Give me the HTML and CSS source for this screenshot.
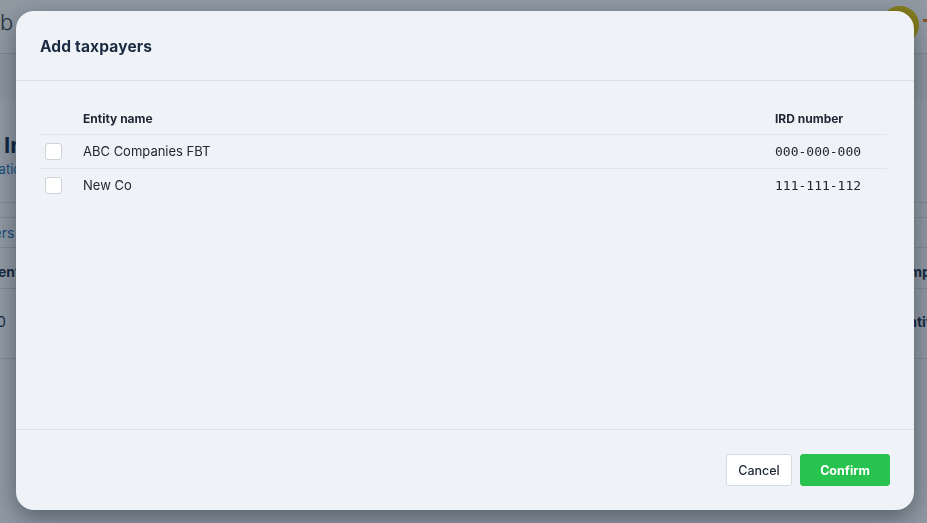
FILE: index.html
```html
<!DOCTYPE html>
<html lang="en">
<head>
<meta charset="utf-8">
<title>Add taxpayers</title>
<link rel="stylesheet" href="styles.css">
</head>
<body>
<div class="page">
  <header class="topbar">
    <span class="brand">b</span>
    <span class="avatar"></span>
    <span class="caret"></span>
  </header>
  <div class="subnav"></div>
  <main class="content">
    <h1 class="page-title">Income tax</h1>
    <a class="page-link">Organisation details</a>
    <div class="strip"></div>
    <div class="tabs"><a class="tab">Taxpayers</a></div>
    <div class="bg-table">
      <div class="bg-row bg-head"><span class="left">Client</span><span class="right">Company</span></div>
      <div class="bg-row bg-body"><span class="left">0</span><span class="right r2">Entities</span></div>
    </div>
  </main>
</div>

<div class="overlay">
  <div class="modal" role="dialog" aria-labelledby="modal-title">
    <div class="modal-header">
      <h2 id="modal-title">Add taxpayers</h2>
    </div>
    <div class="modal-body">
      <table class="tp-table">
        <thead>
          <tr>
            <th class="col-check"></th>
            <th class="col-name">Entity name</th>
            <th class="col-ird">IRD number</th>
          </tr>
        </thead>
        <tbody>
          <tr>
            <td class="col-check"><span class="checkbox"></span></td>
            <td class="col-name">ABC Companies FBT</td>
            <td class="col-ird ird">000-000-000</td>
          </tr>
          <tr>
            <td class="col-check"><span class="checkbox"></span></td>
            <td class="col-name">New Co</td>
            <td class="col-ird ird">111-111-112</td>
          </tr>
        </tbody>
      </table>
    </div>
    <div class="modal-footer">
      <button class="btn btn-cancel">Cancel</button>
      <button class="btn btn-confirm">Confirm</button>
    </div>
  </div>
</div>
</body>
</html>
```

FILE: styles.css
```css
* { box-sizing: border-box; }
html, body { margin: 0; padding: 0; }
body {
  width: 927px;
  height: 523px;
  overflow: hidden;
  font-family: Inter, "Noto Sans", Arial, sans-serif;
  background: #ffffff;
}

/* background page */
.page { width: 927px; height: 523px; overflow: hidden; background: #fff; }
.topbar {
  height: 54px;
  border-bottom: 1px solid #d5dbe2;
  display: flex;
  align-items: center;
  background: #fff;
}
.brand { font-size: 22px; color: #3a3a3a; margin-top: -10px; font-weight: 300; }
.avatar {
  margin-left: auto;
  width: 38px; height: 38px;
  border-radius: 50%;
  background: #e8c800;
  margin-top: -4px;
}
.caret { width: 10px; height: 3px; margin-left: 4px; margin-right: -6px; background: #f47c20; margin-top: -12px; }
.subnav { height: 46px; background: #f6f7f9; }
.content { padding: 32px 0 0 4px; background: #fff; }
.page-title { margin: 0; font-size: 22px; font-weight: 700; color: #0e2a4a; line-height: 26px; white-space: nowrap; }
.page-link { display: block; font-size: 13px; color: #1c6fb8; line-height: 18px; margin: 2px 0 0 -53px; white-space: nowrap; }
.strip { margin: 24px 0 0 -4px; height: 16px; border-top: 1px solid #dfe3e8; border-bottom: 1px solid #dfe3e8; }
.tabs { margin-left: -4px; border-bottom: 1px solid #dfe3e8; height: 30px; display: flex; align-items: center; }
.tab { font-size: 14px; color: #1c6fb8; margin-left: -54px; white-space: nowrap; }
.bg-table { margin-left: -4px; }
.bg-row { display: flex; justify-content: space-between; border-bottom: 1px solid #dfe3e8; font-size: 14px; color: #1a2b44; white-space: nowrap; }
.bg-head { font-weight: 700; height: 41px; padding-top: 15px; }
.bg-body { height: 70px; padding-top: 24px; }
.bg-row .left { margin-left: -20px; }
.bg-body .left { margin-left: -3px; }
.bg-row .right { margin-right: -29px; font-weight: 700; }
.bg-row .r2 { margin-right: -24px; font-weight: 700; }

/* overlay + modal */
.overlay {
  position: fixed;
  inset: 0;
  background: rgba(22, 40, 60, 0.47);
  display: flex;
  align-items: flex-start;
  justify-content: flex-start;
  padding: 11px 0 0 16px;
}
.modal {
  width: 898px;
  height: 499px;
  background: #eff2f7;
  border-radius: 18px;
  box-shadow: 0 8px 24px rgba(10, 20, 35, 0.45);
  display: flex;
  flex-direction: column;
  overflow: hidden;
}
.modal-header {
  height: 70px;
  border-bottom: 1px solid #dde1e6;
  display: flex;
  align-items: center;
  padding: 0 24px;
}
.modal-header h2 {
  margin: 1px 0 0;
  font-family: Inter, "Noto Sans", Arial, sans-serif;
  font-size: 15.5px;
  font-weight: 700;
  color: #1b2b41;
  letter-spacing: 0.15px;
}
.modal-body {
  flex: 1;
  padding: 22px 27px 0 24px;
}
.tp-table {
  width: 100%;
  border-collapse: collapse;
  font-size: 13px;
  color: #23272e;
}
.tp-table th {
  font-size: 12px;
  font-weight: 700;
  text-align: left;
  color: #1f2633;
  height: 31px;
  vertical-align: middle;
  border-bottom: 1px solid #e2e6eb;
  padding: 0;
}
.tp-table td {
  height: 34px;
  padding: 0;
  vertical-align: middle;
  border-bottom: 1px solid #e2e6eb;
}
.tp-table tbody tr:last-child td { border-bottom: none; }
.col-check { width: 43px; padding-left: 5px !important; }
.col-ird { width: 112px; }
.ird { font-family: "DejaVu Sans Mono", "Liberation Mono", monospace; font-size: 13px; color: #23272e; }
.checkbox {
  display: block;
  width: 17px; height: 17px;
  background: #fff;
  border: 1px solid #cfd3d8;
  border-radius: 3px;
}

.modal-footer {
  height: 81px;
  border-top: 1px solid #dde1e6;
  display: flex;
  justify-content: flex-end;
  align-items: center;
  gap: 8px;
  padding: 0 24px;
}
.btn {
  height: 32px;
  border-radius: 3px;
  font-family: Inter, "Noto Sans", Arial, sans-serif;
  font-size: 12.5px;
  cursor: pointer;
}
.btn-cancel {
  width: 66px;
  background: #fff;
  border: 1px solid #d6dbe1;
  color: #1c2533;
  font-weight: 500;
}
.btn-confirm {
  width: 90px;
  background: #28c24f;
  border: 1px solid #28c24f;
  color: #fff;
  font-weight: 700;
}
```
